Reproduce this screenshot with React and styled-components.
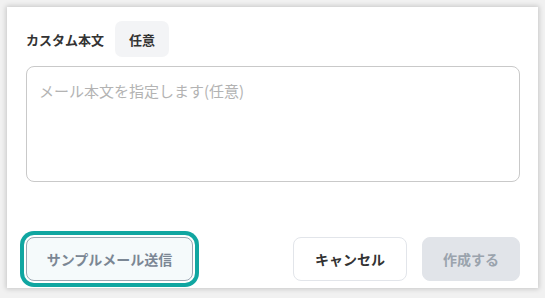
import React from 'react';
import styled, { createGlobalStyle } from 'styled-components';

const GlobalStyle = createGlobalStyle`
  html, body {
    margin: 0;
    padding: 0;
    background: #f1f1f1;
  }
  body {
    font-family: "Noto Sans CJK JP", "Noto Sans", sans-serif;
  }
`;

const Page = styled.div`
  width: 545px;
  height: 298px;
  padding: 7px;
  box-sizing: border-box;
`;

const Card = styled.div`
  width: 531px;
  height: 281px;
  box-sizing: border-box;
  background: #ffffff;
  box-shadow: 0 0 5px 1px rgba(0, 0, 0, 0.18);
  padding: 14px 18px 7px 19px;
  display: flex;
  flex-direction: column;
`;

const Header = styled.div`
  display: flex;
  align-items: center;
  gap: 11px;
  height: 36px;
`;

const Label = styled.span`
  font-size: 13px;
  font-weight: 700;
  color: #333;
`;

const Badge = styled.span`
  display: inline-flex;
  align-items: center;
  justify-content: center;
  height: 36px;
  padding: 0 14px;
  border-radius: 7px;
  background: #f3f4f6;
  font-size: 13px;
  font-weight: 700;
  color: #333;
`;

const BodyInput = styled.textarea`
  margin-top: 9px;
  height: 116px;
  width: 100%;
  box-sizing: border-box;
  resize: none;
  border: 1px solid #c9c9c9;
  border-radius: 8px;
  padding: 12px 12px;
  font-family: inherit;
  font-size: 15px;
  line-height: 1.55;
  color: #333;
  outline: none;
  &::placeholder {
    color: #b3b3b3;
  }
`;

const Footer = styled.div`
  margin-top: auto;
  display: flex;
  align-items: center;
  justify-content: space-between;
`;

const Actions = styled.div`
  display: flex;
  gap: 15px;
`;

const Button = styled.button`
  height: 44px;
  width: ${({ $w }) => $w}px;
  padding: 0;
  box-sizing: border-box;
  display: inline-flex;
  align-items: center;
  justify-content: center;
  white-space: nowrap;
  border-radius: 8px;
  font-family: inherit;
  font-size: 14px;
  font-weight: 700;
  cursor: pointer;
  border: 1px solid ${({ $variant }) =>
    $variant === 'sample' ? '#9aa6b2' : $variant === 'primary' ? '#e1e4e9' : '#e2e5ea'};
  background: ${({ $variant }) =>
    $variant === 'sample' ? '#f5fafb' : $variant === 'primary' ? '#e1e4e9' : '#ffffff'};
  color: ${({ $variant }) =>
    $variant === 'sample' ? '#7b8794' : $variant === 'primary' ? '#9aa3ad' : '#333333'};
  box-shadow: ${({ $focused }) =>
    $focused ? '0 0 0 2px #ffffff, 0 0 0 6px #10a6a1' : 'none'};
`;

export default function App() {
  return (
    <>
      <GlobalStyle />
      <Page>
        <Card>
          <Header>
            <Label>カスタム本文</Label>
            <Badge>任意</Badge>
          </Header>
          <BodyInput placeholder="メール本文を指定します(任意)" />
          <Footer>
            <Button $variant="sample" $focused $w={167}>
              サンプルメール送信
            </Button>
            <Actions>
              <Button $w={114}>キャンセル</Button>
              <Button $variant="primary" $w={98} disabled>
                作成する
              </Button>
            </Actions>
          </Footer>
        </Card>
      </Page>
    </>
  );
}
